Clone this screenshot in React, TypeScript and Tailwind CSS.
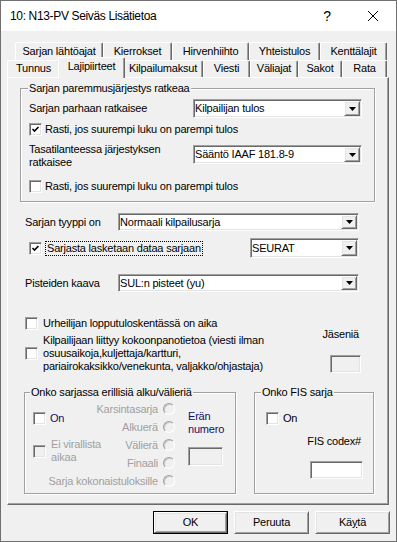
import React from "react";

const sunken =
  "border border-t-[#a0a0a0] border-l-[#a0a0a0] border-r-white border-b-white shadow-[inset_1px_1px_0_#696969,inset_-1px_-1px_0_#e3e3e3]";
const raised =
  "border border-t-white border-l-white border-r-[#696969] border-b-[#696969] shadow-[inset_1px_1px_0_#e3e3e3,inset_-1px_-1px_0_#a0a0a0]";

function Check({ checked, disabled }: { checked?: boolean; disabled?: boolean }) {
  return (
    <span
      className={`w-[13px] h-[13px] shrink-0 flex items-center justify-center ${sunken} ${
        disabled ? "bg-[#f0f0f0]" : "bg-white"
      }`}
    >
      {checked && (
        <svg width="9" height="9" viewBox="0 0 9 9">
          <path d="M1.5 4 L3.5 6 L7.5 2" stroke="#000" strokeWidth="1.6" fill="none" />
        </svg>
      )}
    </span>
  );
}

function Radio() {
  return (
    <span className="w-[12px] h-[12px] shrink-0 rounded-full border border-t-[#a0a0a0] border-l-[#a0a0a0] border-r-white border-b-white bg-[#f0f0f0] shadow-[inset_1px_1px_0_#c8c8c8]" />
  );
}

function Combo({ value, className }: { value: string; className: string }) {
  return (
    <div className={`flex bg-white ${sunken} ${className}`}>
      <span className="flex-1 pl-[1px] flex items-center whitespace-nowrap">{value}</span>
      <span className={`w-[16px] m-[1px] flex items-center justify-center bg-[#f0f0f0] ${raised}`}>
        <svg width="7" height="4" viewBox="0 0 7 4">
          <path d="M0 0 H7 L3.5 4 Z" fill="#000" />
        </svg>
      </span>
    </div>
  );
}

function Field({ className, disabled }: { className: string; disabled?: boolean }) {
  return <div className={`${sunken} ${disabled ? "bg-[#f0f0f0]" : "bg-white"} ${className}`} />;
}

function Group({
  title,
  titleClass,
  className,
  children,
}: {
  title: string;
  titleClass: string;
  className: string;
  children: React.ReactNode;
}) {
  return (
    <div
      className={`flex flex-col border border-[#a0a0a0] shadow-[inset_1px_1px_0_#fff,1px_1px_0_#fff] ${className}`}
    >
      <div className={`-mt-[7px] self-start bg-[#f0f0f0] px-[1px] h-[13px] leading-[13px] ${titleClass}`}>
        {title}
      </div>
      {children}
    </div>
  );
}

function Tab({ label, className, selected }: { label: string; className: string; selected?: boolean }) {
  return (
    <div
      className={`flex items-center justify-center whitespace-nowrap rounded-t-[2px] border-t border-l border-white border-r border-r-[#696969] shadow-[inset_-1px_0_0_#a0a0a0] bg-[#f0f0f0] ${
        selected ? "relative z-10 -mt-[3px] -mx-[2px] h-[21px] pb-[3px]" : "h-full pb-[1px]"
      } ${className}`}
    >
      {label}
    </div>
  );
}

function Btn({ children, primary }: { children: React.ReactNode; primary?: boolean }) {
  return (
    <div className={`w-[75px] h-[23px] ${primary ? "border border-black" : ""}`}>
      <div className={`w-full h-full flex items-center justify-center bg-[#f0f0f0] ${raised}`}>{children}</div>
    </div>
  );
}

export default function App() {
  const rounds = ["Karsintasarja", "Alkuerä", "Välierä", "Finaali", "Sarja kokonaistuloksille"];
  return (
    <div className="w-[397px] h-[542px] flex flex-col border border-[#707070] bg-[#f0f0f0] text-black text-[11px] leading-[13px] tracking-[-0.2px] font-['Liberation_Sans',Arial,sans-serif] overflow-hidden">
      <div className="h-[30px] shrink-0 bg-white flex items-center">
        <span className="ml-[9px] text-[12px] tracking-[-0.35px]">10: N13-PV Seiväs Lisätietoa</span>
        <span className="ml-auto w-[46px] h-full flex items-center justify-center text-[14px]">?</span>
        <span className="w-[46px] h-full flex items-center justify-center">
          <svg width="10" height="10" viewBox="0 0 10 10">
            <path d="M0 0 L10 10 M10 0 L0 10" stroke="#000" strokeWidth="1" />
          </svg>
        </span>
      </div>

      <div className="flex flex-col">
        <div className="mt-[11px] ml-[14px] flex h-[18px]">
          <Tab label="Sarjan lähtöajat" className="w-[88px]" />
          <Tab label="Kierrokset" className="w-[69px]" />
          <Tab label="Hirvenhiihto" className="w-[77px]" />
          <Tab label="Yhteistulos" className="w-[71px]" />
          <Tab label="Kenttälajit" className="w-[67px]" />
        </div>
        <div className="ml-[6px] flex h-[17px]">
          <Tab label="Tunnus" className="w-[53px]" />
          <Tab label="Lajipiirteet" className="w-[67px]" selected />
          <Tab label="Kilpailumaksut" className="w-[80px]" />
          <Tab label="Viesti" className="w-[47px]" />
          <Tab label="Väliajat" className="w-[48px]" />
          <Tab label="Sakot" className="w-[44px]" />
          <Tab label="Rata" className="w-[45px]" />
        </div>

        <div className="ml-[6px] w-[382px] h-[428px] flex flex-col border-t border-l border-white border-r border-b border-r-[#696969] border-b-[#696969] shadow-[inset_-1px_-1px_0_#a0a0a0]">
          <Group
            title="Sarjan paremmusjärjestys ratkeaa"
            titleClass="ml-[7px]"
            className="ml-[12px] mt-[10px] w-[355px] h-[114px]"
          >
            <div className="mt-[4px] ml-[8px] flex items-center h-[19px]">
              <span className="w-[164px]">Sarjan parhaan ratkaisee</span>
              <Combo value="Kilpailijan tulos" className="w-[169px] h-[19px]" />
            </div>
            <div className="mt-[5px] ml-[8px] flex items-center h-[13px] gap-[3px]">
              <Check checked />
              <span>Rasti, jos suurempi luku on parempi tulos</span>
            </div>
            <div className="mt-[7px] ml-[8px] flex items-start">
              <span className="w-[164px]">
                Tasatilanteessa järjestyksen
                <br />
                ratkaisee
              </span>
              <Combo value="Sääntö IAAF 181.8-9" className="mt-[2px] w-[169px] h-[19px]" />
            </div>
            <div className="mt-[11px] ml-[8px] flex items-center h-[13px] gap-[3px]">
              <Check />
              <span>Rasti, jos suurempi luku on parempi tulos</span>
            </div>
          </Group>

          <div className="mt-[11px] ml-[17px] flex items-center h-[18px]">
            <span className="w-[93px]">Sarjan tyyppi on</span>
            <Combo value="Normaali kilpailusarja" className="w-[241px] h-[18px]" />
          </div>

          <div className="mt-[7px] ml-[21px] flex items-center h-[20px]">
            <div className="w-[221px] flex items-center gap-[3px]">
              <Check checked />
              <span className="border border-dotted border-black px-[1px] leading-[13px]">
                Sarjasta lasketaan dataa sarjaan
              </span>
            </div>
            <Combo value="SEURAT" className="w-[109px] h-[20px]" />
          </div>

          <div className="mt-[16px] ml-[17px] flex items-center h-[18px]">
            <span className="w-[93px]">Pisteiden kaava</span>
            <Combo value="SUL:n pisteet (yu)" className="w-[241px] h-[18px]" />
          </div>

          <div className="mt-[25px] ml-[17px] flex items-center h-[13px] gap-[5px]">
            <Check />
            <span>Urheilijan lopputuloskentässä on aika</span>
          </div>

          <div className="mt-[4px] ml-[17px] flex h-[39px]">
            <div className="self-center">
              <Check />
            </div>
            <span className="ml-[5px] whitespace-nowrap">
              Kilpailijaan liittyy kokoonpanotietoa (viesti ilman
              <br />
              osuusaikoja,kuljettaja/kartturi,
              <br />
              pariairokaksikko/venekunta, valjakko/ohjastaja)
            </span>
            <div className="ml-auto mr-[27px] -mt-[6px] flex flex-col items-end">
              <span className="mr-[2px]">Jäseniä</span>
              <Field className="mt-[14px] w-[31px] h-[18px]" disabled />
            </div>
          </div>

          <div className="mt-[19px] ml-[16px] flex gap-[18px]">
            <Group title="Onko sarjassa erillisiä alku/välieriä" titleClass="ml-[5px]" className="w-[212px] h-[102px]">
              <div className="flex">
                <div className="grid w-[150px]">
                  <div className="[grid-area:1/1] mt-[1px] flex flex-col items-end text-[#a0a0a0]">
                    {rounds.map((r) => (
                      <div key={r} className="h-[18px] flex items-center gap-[5px]">
                        <span>{r}</span>
                        <Radio />
                      </div>
                    ))}
                  </div>
                  <div className="[grid-area:1/1] pl-[8px] flex flex-col items-start">
                    <div className="mt-[13px] h-[13px] flex items-center gap-[4px]">
                      <Check />
                      <span className="text-[#10106a]">On</span>
                    </div>
                    <div className="mt-[13px] flex items-center gap-[5px]">
                      <Check disabled />
                      <span className="text-[#a0a0a0]">
                        Ei virallista
                        <br />
                        aikaa
                      </span>
                    </div>
                  </div>
                </div>
                <div className="ml-[13px] mt-[11px] flex flex-col">
                  <span className="text-[#10106a]">
                    Erän
                    <br />
                    numero
                  </span>
                  <Field className="mt-[11px] w-[35px] h-[19px]" disabled />
                </div>
              </div>
            </Group>

            <Group title="Onko FIS sarja" titleClass="ml-[6px]" className="w-[120px] h-[102px]">
              <div className="mt-[13px] ml-[11px] h-[13px] flex items-center gap-[4px]">
                <Check />
                <span>On</span>
              </div>
              <span className="mt-[10px] self-end mr-[12px]">FIS codex#</span>
              <Field className="mt-[13px] self-end mr-[10px] w-[53px] h-[18px]" />
            </Group>
          </div>
        </div>

        <div className="mt-[6px] ml-[152px] flex gap-[6px]">
          <Btn primary>OK</Btn>
          <Btn>Peruuta</Btn>
          <Btn>
            <span>
              Kä<u>y</u>tä
            </span>
          </Btn>
        </div>
      </div>
    </div>
  );
}
